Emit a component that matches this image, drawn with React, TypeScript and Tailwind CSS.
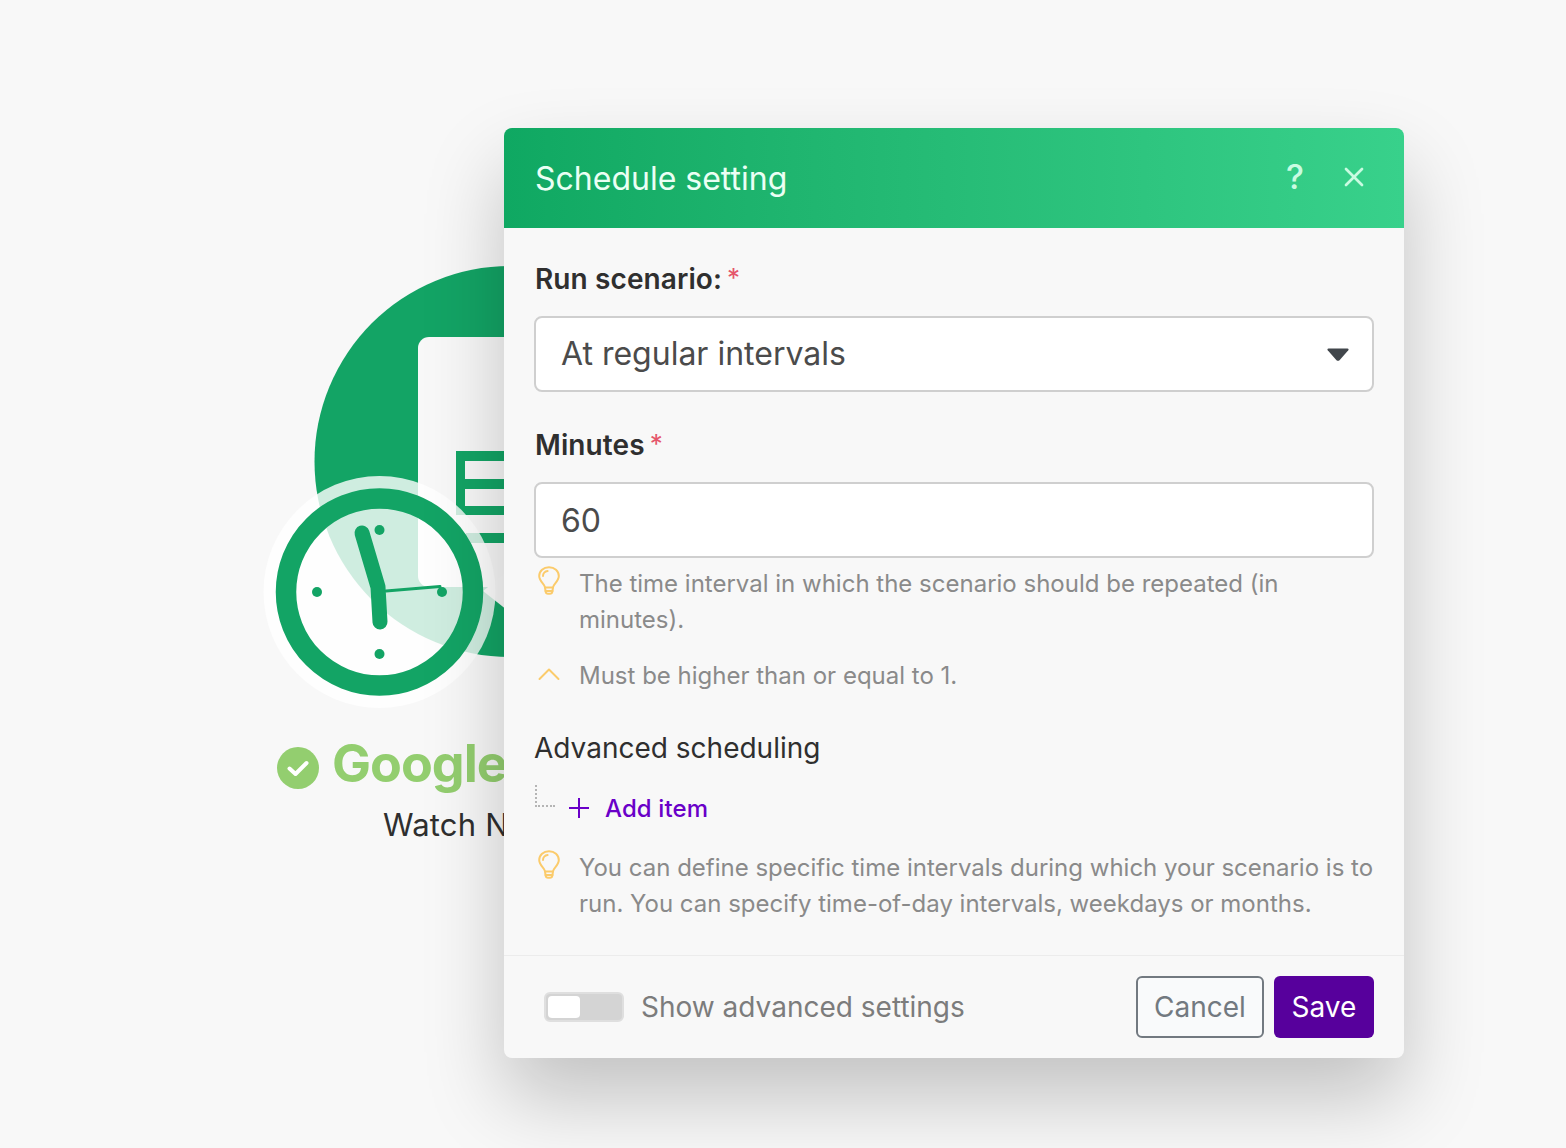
import { X } from "lucide-react";

const font = { fontFamily: "Inter, 'Liberation Sans', sans-serif" };

function Bulb() {
  return (
    <svg width="22" height="30" viewBox="0 0 22 30" fill="none" stroke="#fbcb6b" strokeWidth="2" strokeLinecap="round" strokeLinejoin="round">
      <path d="M7 21.5c0-3-5.8-6-5.8-11.4C1.2 5 5.4 1.2 11 1.2s9.800 3.800 9.800 8.900c0 5.400-5.800 8.400-5.800 11.400z" />
      <path d="M7 21.500l.7 4.300c.2 1.300 1.100 1.900 2.300 1.900h2c1.200 0 2.100-.6 2.300-1.900l.7-4.300" />
      <path d="M7.500 25h7" />
      <path d="M5 10c0-2.600 2-4.700 4.600-5" />
    </svg>
  );
}

function Chevron() {
  return (
    <svg width="22" height="14" viewBox="0 0 22 14" fill="none" stroke="#fbcb6b" strokeWidth="2" strokeLinecap="round" strokeLinejoin="round">
      <path d="M1.500 12L11 2.500 20.500 12" />
    </svg>
  );
}

function ModuleArt() {
  return (
    <svg className="absolute left-[250px] top-[250px]" width="270" height="470" viewBox="250 250 270 470" fill="none">
      <circle cx="510" cy="461.500" r="195.500" fill="#13a465" />
      <rect x="418" y="337" width="200" height="250" rx="11" fill="#f8f8f8" />
      <path d="M456 451h60v64h-60z M465 461v18h51v-18z M465 489v17h51v-17z" fillRule="evenodd" fill="#13a465" />
      <rect x="466" y="533" width="50" height="10" fill="#13a465" />
      <path d="M483 591l24-19v38z" fill="#f9f9f9" />
      <circle cx="379.500" cy="592" r="116" fill="#ffffff" fillOpacity="0.8" />
      <circle cx="379.500" cy="592" r="93.500" stroke="#13a465" strokeWidth="20.500" />
      <path d="M362 533l16 54 2 35" stroke="#13a465" strokeWidth="15" strokeLinecap="round" strokeLinejoin="round" />
      <path d="M386 591l54-4.500" stroke="#13a465" strokeWidth="3" strokeLinecap="round" />
      <circle cx="379.500" cy="530" r="5" fill="#13a465" />
      <circle cx="317" cy="592" r="5" fill="#13a465" />
      <circle cx="442" cy="592" r="5" fill="#13a465" />
      <circle cx="379.500" cy="654" r="5" fill="#13a465" />
    </svg>
  );
}

export default function App() {
  return (
    <div className="relative h-[1148px] w-full overflow-hidden bg-[#f8f8f8]" style={font}>
      {/* scenario node behind the dialog */}
      <ModuleArt />
      <div className="absolute left-[277px] top-[735px] flex items-center gap-[13px]">
        <svg width="42" height="42" viewBox="0 0 42 42">
          <circle cx="21" cy="21" r="21" fill="#93ce6f" />
          <path d="M12.500 21.500l6 5.500L29.500 16" fill="none" stroke="#ffffff" strokeWidth="4" strokeLinecap="round" strokeLinejoin="round" />
        </svg>
        <span className="mb-[8px] text-[52px] leading-[58px] font-bold tracking-[-1px] text-[#93ce6f]">Google</span>
      </div>
      <span className="absolute left-[383px] top-[805px] text-[31px] leading-[40px] tracking-[0.2px] text-[#2f2f2f]">Watch N</span>

      <div className="relative flex h-full pl-[504px] pt-[128px]">
        <div className="flex h-[930px] w-[900px] flex-col overflow-hidden rounded-lg bg-[#f8f8f8] shadow-[0_40px_80px_rgba(0,0,0,0.22)]">
          <div className="flex h-[100px] shrink-0 items-center bg-gradient-to-r from-[#0fa862] to-[#38d18b] pl-[31px] pr-[34px]">
            <span className="pt-[1px] text-[32px] leading-[40px] text-[#eafff4]">Schedule setting</span>
            <span className="ml-auto w-[28px] -translate-y-px text-center text-[34px] leading-[40px] font-medium text-[#c9fbe1]">?</span>
            <X className="ml-[29px] h-[32px] w-[32px] -translate-y-px text-[#c9fbe1]" strokeWidth={2} />
          </div>

          <div className="flex flex-1 flex-col px-[30px] pt-[31px]">
            <div className="flex h-[40px] items-center pl-px text-[28px] font-semibold tracking-[0.1px] text-[#2f2f2f]">
              Run scenario:
              <span className="ml-[5px] -translate-y-[2px] text-[26px] font-normal text-[#e5566a]">*</span>
            </div>
            <div className="mt-[17px] flex h-[76px] items-center rounded-lg border-2 border-[#cfcfcf] bg-white pl-[25px] pr-[23px] text-[32px] text-[#4b4b4b]">
              At regular intervals
              <svg className="ml-auto" width="22" height="13" viewBox="0 0 22 13">
                <path d="M1.500 0.500h19c1 0 1.400 1 .8 1.700l-8.800 10c-.8.8-2.200.8-3 0l-8.800-10C.1 1.500.5.500 1.500.5z" fill="#41464b" />
              </svg>
            </div>

            <div className="mt-[33px] flex h-[40px] items-center pl-px text-[28px] font-semibold tracking-[0.1px] text-[#2f2f2f]">
              Minutes
              <span className="ml-[5px] -translate-y-[2px] text-[26px] font-normal text-[#e5566a]">*</span>
            </div>
            <div className="mt-[17px] flex h-[76px] items-center rounded-lg border-2 border-[#cfcfcf] bg-white pl-[25px] pt-px text-[32px] text-[#4b4b4b]">
              60
            </div>

            <div className="mt-[8px] flex text-[24px] leading-[36px] text-[#8a8a8a]">
              <div className="w-[45px] shrink-0 pl-[4px]"><Bulb /></div>
              <p>The time interval in which the scenario should be repeated (in minutes).</p>
            </div>
            <div className="mt-[20px] flex text-[24px] leading-[36px] text-[#8a8a8a]">
              <div className="w-[45px] shrink-0 pl-[4px] pt-[9px]"><Chevron /></div>
              <p>Must be higher than or equal to 1.</p>
            </div>

            <div className="mt-[34px] flex h-[40px] items-center text-[28px] text-[#2f2f2f]">Advanced scheduling</div>

            <div className="mt-[20px] flex h-[40px] items-center">
              <div className="mb-[25px] ml-px h-[22px] w-[20px] border-b-2 border-l-2 border-dotted border-[#b5b5b5]" />
              <svg className="ml-[14px]" width="20" height="20" viewBox="0 0 20 20" stroke="#6a00c8" strokeWidth="2">
                <path d="M10 0v20M0 10h20" />
              </svg>
              <span className="ml-[16px] pt-px text-[24px] font-medium tracking-[0.1px] text-[#6a00c8]">Add item</span>
            </div>

            <div className="mt-[22px] flex text-[24px] leading-[36px] text-[#8a8a8a]">
              <div className="w-[45px] shrink-0 pl-[4px]"><Bulb /></div>
              <p>You can define specific time intervals during which your scenario is to run. You can specify time-of-day intervals, weekdays or months.</p>
            </div>
          </div>

          <div className="flex h-[103px] shrink-0 items-center border-t border-[#ececec] pl-[40px] pr-[30px]">
            <div className="flex h-[30px] w-[80px] items-center rounded-md border-2 border-[#dfdfdf] bg-[#d4d4d4] pl-[2px]">
              <div className="h-[22px] w-[32px] rounded bg-white" />
            </div>
            <span className="ml-[17px] text-[28px] text-[#7c7c7c]">Show advanced settings</span>
            <button className="ml-auto flex h-[62px] w-[128px] items-center justify-center rounded-md border-2 border-[#727980] bg-[#f9fafb] text-[28px] text-[#727980]">Cancel</button>
            <button className="ml-[10px] flex h-[62px] w-[100px] items-center justify-center rounded-md bg-[#57009c] text-[28px] text-white">Save</button>
          </div>
        </div>
      </div>
    </div>
  );
}
